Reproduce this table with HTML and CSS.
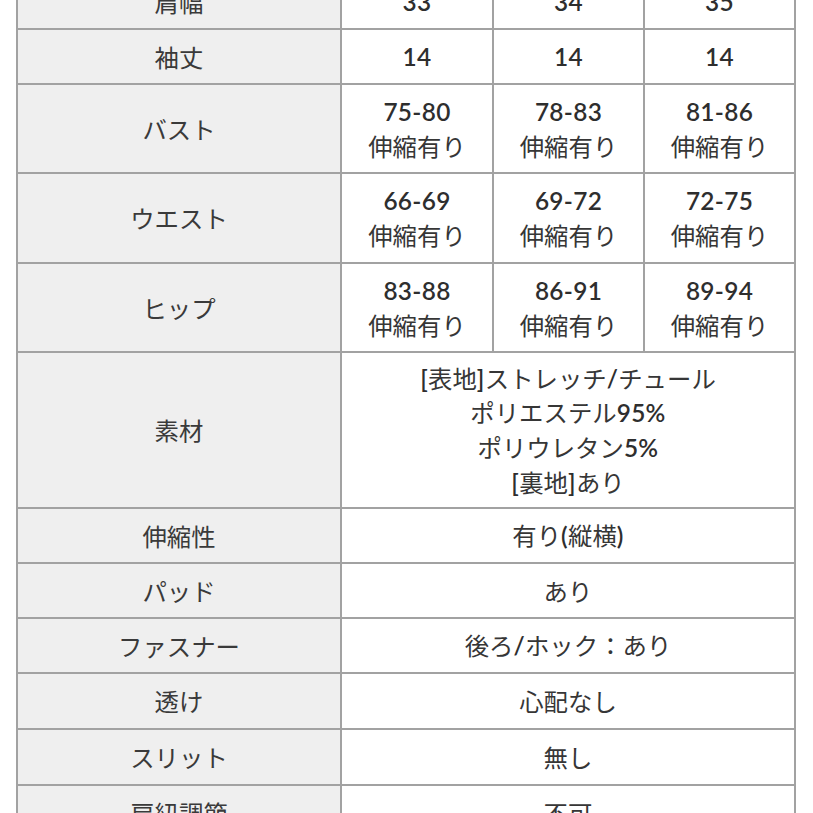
FILE: index.html
```html
<!DOCTYPE html>
<html lang="ja">
<head>
<meta charset="utf-8">
<title>サイズ表</title>
<link rel="stylesheet" href="styles.css">
</head>
<body>
<div class="page">
  <div class="spec">
    <div class="cell label r1">肩幅</div>
    <div class="cell val r1"><span class="lat">33</span></div>
    <div class="cell val r1"><span class="lat">34</span></div>
    <div class="cell val r1 last"><span class="lat">35</span></div>

    <div class="cell label">袖丈</div>
    <div class="cell val"><span class="lat">14</span></div>
    <div class="cell val"><span class="lat">14</span></div>
    <div class="cell val last"><span class="lat">14</span></div>

    <div class="cell label">バスト</div>
    <div class="cell val"><span class="lat">75-80</span><span>伸縮有り</span></div>
    <div class="cell val"><span class="lat">78-83</span><span>伸縮有り</span></div>
    <div class="cell val last"><span class="lat">81-86</span><span>伸縮有り</span></div>

    <div class="cell label">ウエスト</div>
    <div class="cell val"><span class="lat">66-69</span><span>伸縮有り</span></div>
    <div class="cell val"><span class="lat">69-72</span><span>伸縮有り</span></div>
    <div class="cell val last"><span class="lat">72-75</span><span>伸縮有り</span></div>

    <div class="cell label">ヒップ</div>
    <div class="cell val"><span class="lat">83-88</span><span>伸縮有り</span></div>
    <div class="cell val"><span class="lat">86-91</span><span>伸縮有り</span></div>
    <div class="cell val last"><span class="lat">89-94</span><span>伸縮有り</span></div>

    <div class="cell label">素材</div>
    <div class="cell val wide">
      <span><span class="lat">[</span>表地<span class="lat">]</span>ストレッチ<span class="lat">/</span>チュール</span>
      <span>ポリエステル<span class="lat">95%</span></span>
      <span>ポリウレタン<span class="lat">5%</span></span>
      <span><span class="lat">[</span>裏地<span class="lat">]</span>あり</span>
    </div>

    <div class="cell label">伸縮性</div>
    <div class="cell val wide"><span>有り<span class="lat">(</span>縦横<span class="lat">)</span></span></div>

    <div class="cell label">パッド</div>
    <div class="cell val wide">あり</div>

    <div class="cell label">ファスナー</div>
    <div class="cell val wide"><span>後ろ<span class="lat">/</span>ホック：あり</span></div>

    <div class="cell label">透け</div>
    <div class="cell val wide">心配なし</div>

    <div class="cell label">スリット</div>
    <div class="cell val wide">無し</div>

    <div class="cell label">肩紐調節</div>
    <div class="cell val wide">不可</div>
  </div>
</div>
</body>
</html>
```

FILE: styles.css
```css
html, body {
  margin: 0;
  padding: 0;
  background: #ffffff;
}

body {
  font-family: "Noto Sans CJK JP", "Noto Sans", sans-serif;
  color: #363636;
  overflow: hidden;
  height: 813px;
}

.page {
  padding-left: 16px;
}

.spec {
  margin-top: -27px;
  width: 780px;
  box-sizing: border-box;
  border-top: 2px solid #a2a2a2;
  border-left: 2px solid #a2a2a2;
  display: grid;
  grid-template-columns: 324px 152px 151px 151px;
  grid-template-rows: 55px 55px 89px 90px 89px 156px 55px 55px 55px 56px 56px 55px;
}

.cell {
  box-sizing: border-box;
  border-right: 2px solid #a2a2a2;
  border-bottom: 2px solid #a2a2a2;
  display: flex;
  flex-direction: column;
  align-items: center;
  justify-content: center;
  text-align: center;
  font-size: 24.4px;
  line-height: 33.6px;
  white-space: nowrap;
}

.label {
  background: #efefef;
  color: #3a3a3a;
}

.val {
  background: #ffffff;
  color: #363636;
}

.wide {
  grid-column: span 3;
}

.lat {
  font-family: "Lato", "Noto Sans", sans-serif;
  font-weight: 600;
  color: #2e2e2e;
  letter-spacing: 0.3px;
}
```
